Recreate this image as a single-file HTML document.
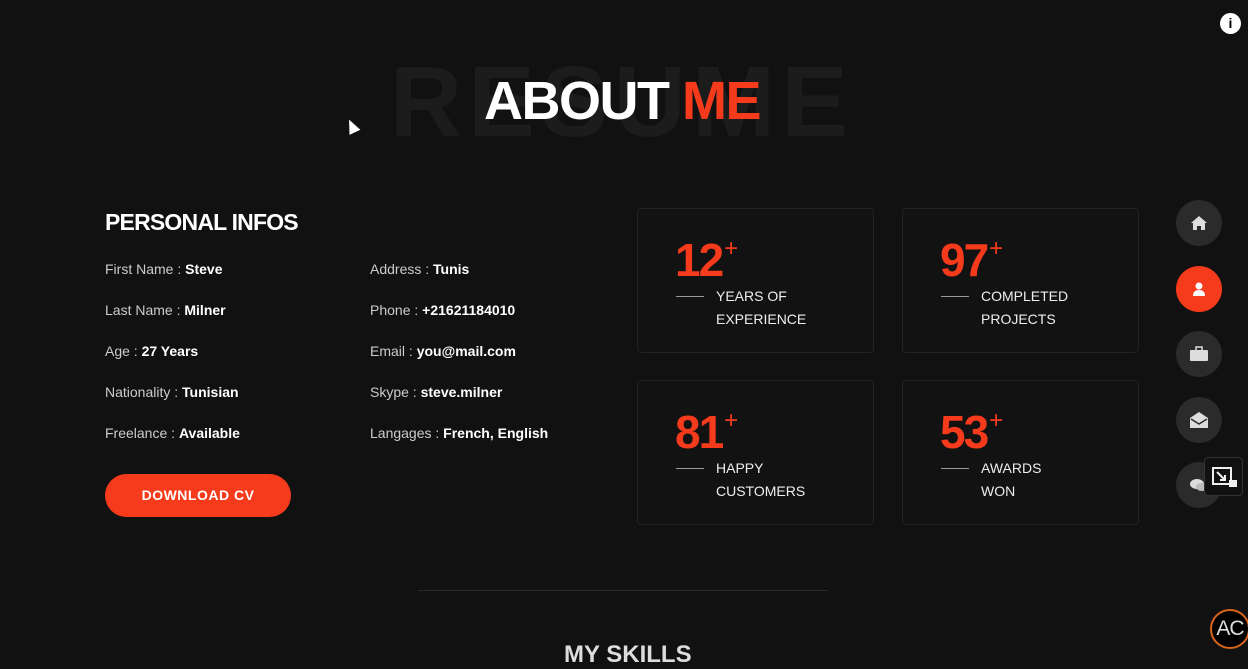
<!DOCTYPE html>
<html><head><meta charset="utf-8"><style>
*{margin:0;padding:0;box-sizing:border-box}
body{width:1248px;height:655px;background:#111;overflow:hidden;position:relative;font-family:"Liberation Sans",sans-serif;color:#fff}
.abs{position:absolute}
.bg{left:390px;top:52px;font-size:100px;font-weight:900;color:#1c1c1c;letter-spacing:6px;line-height:1}
.title{left:484px;top:74px;font-size:54px;font-weight:900;letter-spacing:-1.5px;line-height:1}
.title span{color:#f63a1c}
h2{position:absolute;left:105px;top:209px;font-size:23px;font-weight:700;letter-spacing:-0.8px}
.info{position:absolute;font-size:14px;color:#ccc}
.info b{color:#fff}
.btn{left:105px;top:474px;width:186px;height:43px;border-radius:22px;background:#f63a1c;font-size:14px;font-weight:700;text-align:center;line-height:43px;letter-spacing:.5px}
.card{position:absolute;width:237px;height:145px;border:1px solid #232323;border-radius:4px;background:#121212}
.num{position:absolute;left:37px;top:24px;font-size:46px;font-weight:900;color:#f63a1c;letter-spacing:-2px}
.num sup{font-size:24px;font-weight:400;vertical-align:20px;margin-left:2px}
.line{position:absolute;left:38px;top:87px;width:28px;border-top:1px solid #999}
.lbl{position:absolute;left:78px;top:76px;font-size:14px;line-height:23px;color:#eee}
.nav{position:absolute;left:1176px;width:46px;height:46px;border-radius:50%;background:#2b2b2b;display:flex;align-items:center;justify-content:center}
</style></head><body>
<div class="abs bg">RESUME</div>
<div class="abs title">ABOUT <span>ME</span></div>
<div class="abs" style="left:346px;top:119px;width:0;height:0;border-left:6px solid transparent;border-right:6px solid transparent;border-bottom:14px solid #fff;transform:rotate(-25deg)"></div>
<div class="abs" style="left:1220px;top:13px;width:21px;height:21px;border-radius:50%;background:#fff;color:#000;font-weight:700;font-size:14px;text-align:center;line-height:21px">i</div>
<h2>PERSONAL INFOS</h2>
<div class="info" style="left:105px;top:261px">First Name : <b>Steve</b></div>
<div class="info" style="left:105px;top:302px">Last Name : <b>Milner</b></div>
<div class="info" style="left:105px;top:343px">Age : <b>27 Years</b></div>
<div class="info" style="left:105px;top:384px">Nationality : <b>Tunisian</b></div>
<div class="info" style="left:105px;top:425px">Freelance : <b>Available</b></div>
<div class="info" style="left:370px;top:261px">Address : <b>Tunis</b></div>
<div class="info" style="left:370px;top:302px">Phone : <b>+21621184010</b></div>
<div class="info" style="left:370px;top:343px">Email : <b>you@mail.com</b></div>
<div class="info" style="left:370px;top:384px">Skype : <b>steve.milner</b></div>
<div class="info" style="left:370px;top:425px">Langages : <b>French, English</b></div>
<div class="abs btn">DOWNLOAD CV</div>
<div class="card" style="left:637px;top:208px"><div class="num">12<sup>+</sup></div><div class="line"></div><div class="lbl">YEARS OF<br>EXPERIENCE</div></div>
<div class="card" style="left:902px;top:208px"><div class="num">97<sup>+</sup></div><div class="line"></div><div class="lbl">COMPLETED<br>PROJECTS</div></div>
<div class="card" style="left:637px;top:380px"><div class="num">81<sup>+</sup></div><div class="line"></div><div class="lbl">HAPPY<br>CUSTOMERS</div></div>
<div class="card" style="left:902px;top:380px"><div class="num">53<sup>+</sup></div><div class="line"></div><div class="lbl">AWARDS<br>WON</div></div>
<div class="nav" style="top:200px"><svg width="18" height="16" viewBox="0 0 18 16"><path d="M9 1L1 8h2v7h4v-4h4v4h4V8h2z" fill="#ddd"/></svg></div>
<div class="nav" style="top:266px;background:#f63a1c"><svg width="14" height="16" viewBox="0 0 14 16"><circle cx="7" cy="5" r="3.5" fill="#fff"/><path d="M1 15c0-4 2-6 6-6s6 2 6 6z" fill="#fff"/></svg></div>
<div class="nav" style="top:331px"><svg width="20" height="16" viewBox="0 0 20 16"><rect x="1" y="4" width="18" height="11" rx="1" fill="#ddd"/><rect x="7" y="1" width="6" height="4" fill="none" stroke="#ddd" stroke-width="1.5"/></svg></div>
<div class="nav" style="top:397px"><svg width="20" height="18" viewBox="0 0 20 18"><path d="M1 7l9-6 9 6v10H1z" fill="#ddd"/><path d="M2 8l8 5 8-5" fill="none" stroke="#2b2b2b" stroke-width="1.5"/></svg></div>
<div class="nav" style="top:462px"><svg width="20" height="16" viewBox="0 0 20 16"><ellipse cx="8" cy="7" rx="7" ry="5" fill="#ddd"/><ellipse cx="13" cy="10" rx="6" ry="4" fill="#bbb"/></svg></div>
<div class="abs" style="left:1204px;top:457px;width:39px;height:39px;border:1px solid #333;border-radius:4px;background:#111"><svg width="39" height="39"><rect x="8" y="10" width="18" height="16" fill="none" stroke="#eee" stroke-width="2"/><path d="M12 14l8 8M20 17v5h-5" stroke="#eee" stroke-width="2" fill="none"/><rect x="24" y="22" width="8" height="7" fill="#eee"/></svg></div>
<div class="abs" style="left:1210px;top:609px;width:40px;height:40px;border-radius:50%;border:2px solid #d5641c;background:#000;color:#ddd;font-size:21px;line-height:36px;text-align:center;letter-spacing:-1px">AC</div>
<div class="abs" style="left:418px;top:590px;width:410px;border-top:1px solid #2a2a2a"></div>
<div class="abs" style="left:564px;top:641px;font-size:24px;font-weight:700;color:#ddd">MY SKILLS</div>
</body></html>
